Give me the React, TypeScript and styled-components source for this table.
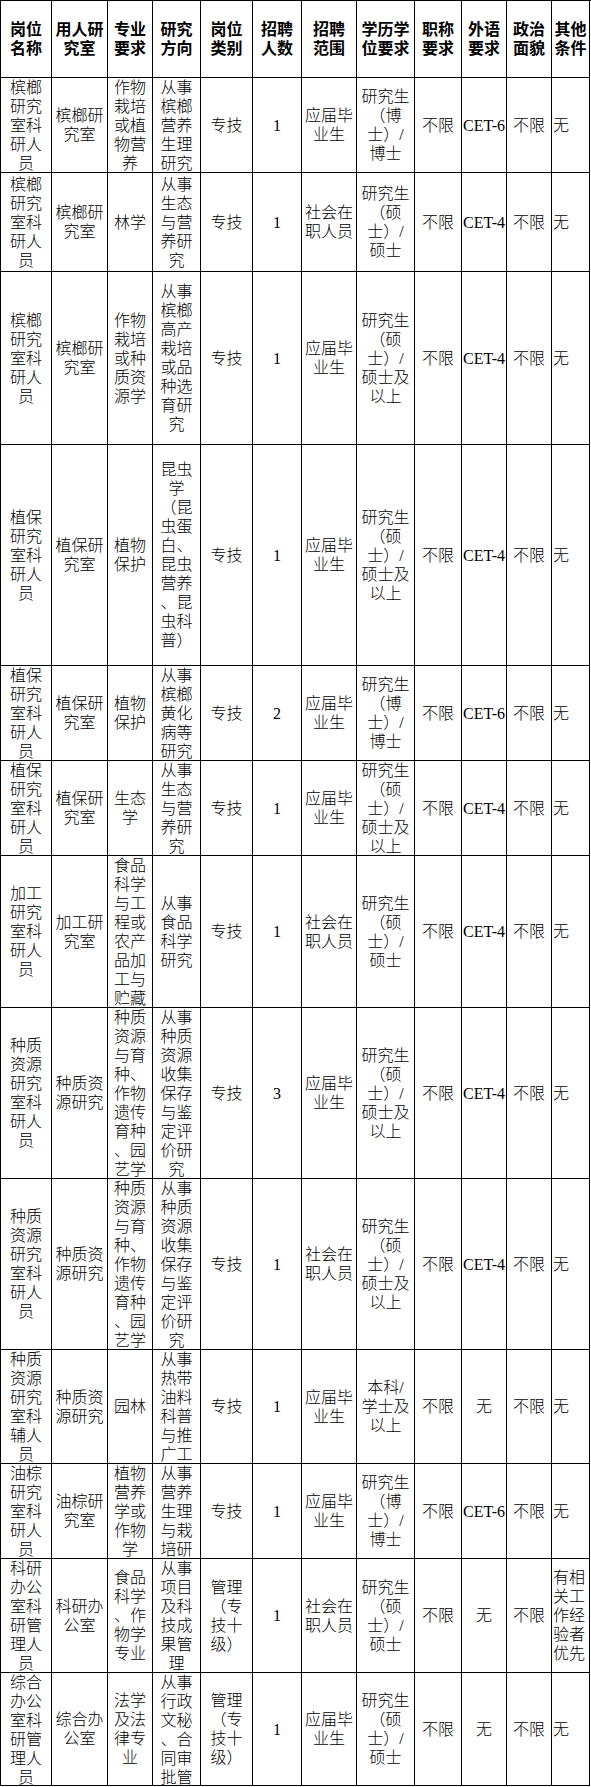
import styled, { createGlobalStyle } from 'styled-components'

const GlobalStyle = createGlobalStyle`
  html, body {
    margin: 0;
    padding: 0;
    background: #fff;
  }
`

const columnWidths = [51, 56, 45, 48, 52, 49, 55, 58, 47, 45, 45, 38]

const Sheet = styled.div<{ $rows: string }>`
  display: grid;
  grid-template-columns: ${columnWidths.map((w) => `${w}px`).join(' ')};
  grid-template-rows: ${(p) => p.$rows};
  width: 590px;
  border-left: 1px solid #000;
  border-top: 1px solid #000;
  color: #000;
  font-family: "Liberation Serif", "Noto Sans CJK SC", serif;
  font-size: 16px;
  line-height: 19px;
`

const Cell = styled.div<{ $head?: boolean; $left?: boolean }>`
  display: flex;
  box-sizing: border-box;
  overflow: hidden;
  border-right: 1px solid #000;
  border-bottom: 1px solid #000;
  padding: 0 1px;
  font-weight: ${(p) => (p.$head ? 700 : 300)};
  text-align: ${(p) => (p.$left ? 'left' : 'center')};
`

const CellText = styled.span`
  display: block;
  width: 100%;
  margin: auto 0;
  white-space: pre;
`

interface IRow {
  height: number
  cells: string[]
}

const header: IRow = {
  height: 77,
  cells: [
    '岗位\n名称', '用人研\n究室', '专业\n要求', '研究\n方向', '岗位\n类别', '招聘\n人数',
    '招聘\n范围', '学历学\n位要求', '职称\n要求', '外语\n要求', '政治\n面貌', '其他\n条件',
  ],
}

const BO = '研究生\n（博\n士）/\n博士'
const SHUO = '研究生\n（硕\n士）/\n硕士'
const SHUO_UP = '研究生\n（硕\n士）/\n硕士及\n以上'
const FRESH = '应届毕\n业生'
const SOCIAL = '社会在\n职人员'
const SEED_MAJOR = '种质\n资源\n与育\n种、\n作物\n遗传\n育种\n、园\n艺学'
const SEED_DIR = '从事\n种质\n资源\n收集\n保存\n与鉴\n定评\n价研\n究'

const rows: IRow[] = [
  {
    height: 95,
    cells: ['槟榔\n研究\n室科\n研人\n员', '槟榔研\n究室', '作物\n栽培\n或植\n物营\n养', '从事\n槟榔\n营养\n生理\n研究', '专技', '1', FRESH, BO, '不限', 'CET-6', '不限', '无'],
  },
  {
    height: 99,
    cells: ['槟榔\n研究\n室科\n研人\n员', '槟榔研\n究室', '林学', '从事\n生态\n与营\n养研\n究', '专技', '1', SOCIAL, SHUO, '不限', 'CET-4', '不限', '无'],
  },
  {
    height: 173,
    cells: ['槟榔\n研究\n室科\n研人\n员', '槟榔研\n究室', '作物\n栽培\n或种\n质资\n源学', '从事\n槟榔\n高产\n栽培\n或品\n种选\n育研\n究', '专技', '1', FRESH, SHUO_UP, '不限', 'CET-4', '不限', '无'],
  },
  {
    height: 221,
    cells: ['植保\n研究\n室科\n研人\n员', '植保研\n究室', '植物\n保护', '昆虫\n学\n（昆\n虫蛋\n白、\n昆虫\n营养\n、昆\n虫科\n普）', '专技', '1', FRESH, SHUO_UP, '不限', 'CET-4', '不限', '无'],
  },
  {
    height: 95,
    cells: ['植保\n研究\n室科\n研人\n员', '植保研\n究室', '植物\n保护', '从事\n槟榔\n黄化\n病等\n研究', '专技', '2', FRESH, BO, '不限', 'CET-6', '不限', '无'],
  },
  {
    height: 95,
    cells: ['植保\n研究\n室科\n研人\n员', '植保研\n究室', '生态\n学', '从事\n生态\n与营\n养研\n究', '专技', '1', FRESH, SHUO_UP, '不限', 'CET-4', '不限', '无'],
  },
  {
    height: 152,
    cells: ['加工\n研究\n室科\n研人\n员', '加工研\n究室', '食品\n科学\n与工\n程或\n农产\n品加\n工与\n贮藏', '从事\n食品\n科学\n研究', '专技', '1', SOCIAL, SHUO, '不限', 'CET-4', '不限', '无'],
  },
  {
    height: 171,
    cells: ['种质\n资源\n研究\n室科\n研人\n员', '种质资\n源研究', SEED_MAJOR, SEED_DIR, '专技', '3', FRESH, SHUO_UP, '不限', 'CET-4', '不限', '无'],
  },
  {
    height: 171,
    cells: ['种质\n资源\n研究\n室科\n研人\n员', '种质资\n源研究', SEED_MAJOR, SEED_DIR, '专技', '1', SOCIAL, SHUO_UP, '不限', 'CET-4', '不限', '无'],
  },
  {
    height: 114,
    cells: ['种质\n资源\n研究\n室科\n辅人\n员', '种质资\n源研究', '园林', '从事\n热带\n油料\n科普\n与推\n广工\n作', '专技', '1', FRESH, '本科/\n学士及\n以上', '不限', '无', '不限', '无'],
  },
  {
    height: 95,
    cells: ['油棕\n研究\n室科\n研人\n员', '油棕研\n究室', '植物\n营养\n学或\n作物\n学', '从事\n营养\n生理\n与栽\n培研\n究', '专技', '1', FRESH, BO, '不限', 'CET-6', '不限', '无'],
  },
  {
    height: 114,
    cells: ['科研\n办公\n室科\n研管\n理人\n员', '科研办\n公室', '食品\n科学\n、作\n物学\n专业', '从事\n项目\n及科\n技成\n果管\n理', '管理\n（专\n技十\n级）', '1', SOCIAL, SHUO, '不限', '无', '不限', '有相\n关工\n作经\n验者\n优先'],
  },
  {
    height: 113,
    cells: ['综合\n办公\n室科\n研管\n理人\n员', '综合办\n公室', '法学\n及法\n律专\n业', '从事\n行政\n文秘\n、合\n同审\n批管\n理', '管理\n（专\n技十\n级）', '1', FRESH, SHUO, '不限', '无', '不限', '无'],
  },
]

const LEFT_COLUMN = 11

const App = () => {
  const all = [header, ...rows]
  const template = all.map((r) => `${r.height}px`).join(' ')

  return (
    <>
      <GlobalStyle />
      <Sheet $rows={template}>
        {all.map((row, ri) =>
          row.cells.map((text, ci) => (
            <Cell key={`${ri}-${ci}`} $head={ri === 0} $left={ri > 0 && ci === LEFT_COLUMN}>
              <CellText>{text}</CellText>
            </Cell>
          ))
        )}
      </Sheet>
    </>
  )
}

export default App
